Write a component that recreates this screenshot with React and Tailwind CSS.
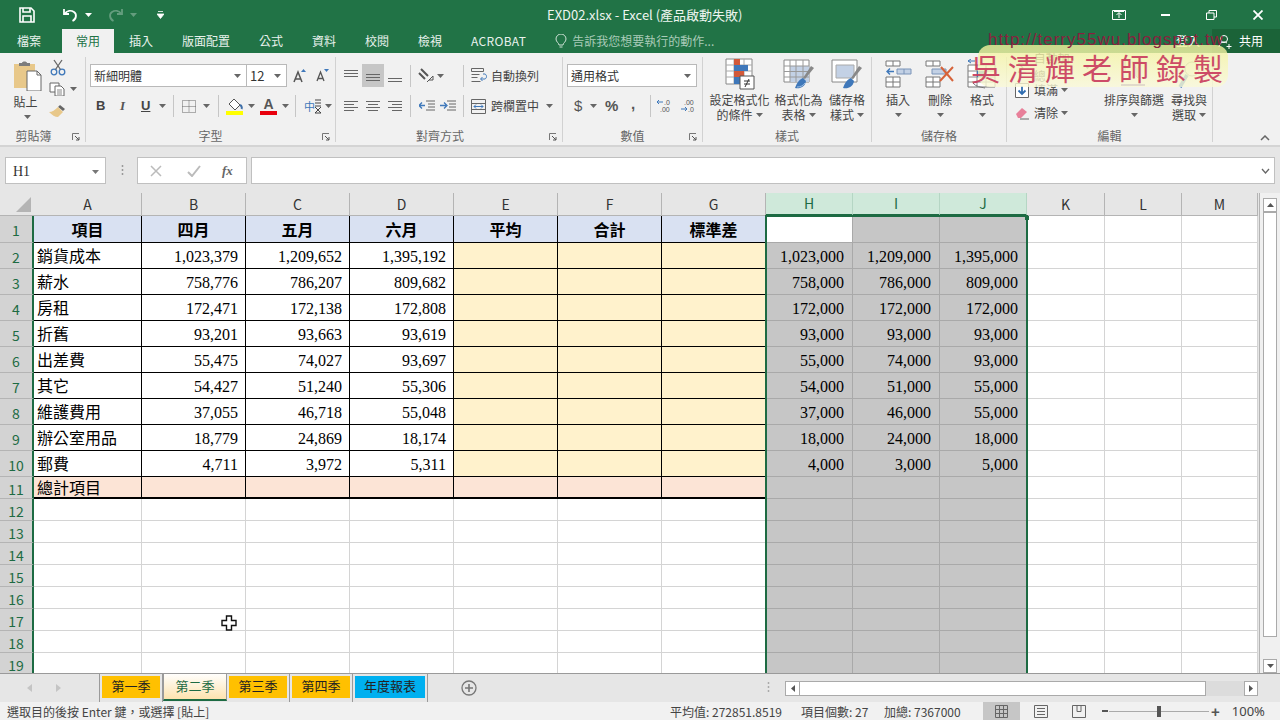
import React from "react";

const ui = { fontFamily: '"Noto Sans CJK TC","Noto Sans",sans-serif' };
const cellFont = { fontFamily: '"Liberation Serif","Noto Sans CJK TC",serif' };

const Caret = ({ c = "#666", className = "" }) => (
  <svg width="7" height="4" viewBox="0 0 7 4" className={className}><path d="M0 0h7L3.5 4z" fill={c} /></svg>
);

const Launcher = () => (
  <svg width="8" height="8" viewBox="0 0 8 8" className="mb-[1px]"><path d="M.5 7V.5H7" stroke="#777" fill="none" /><path d="M3 3l4 4M7 4v3H4" stroke="#555" fill="none" /></svg>
);

const Lines = ({ kind }) => {
  const rows = {
    left: [[1, 15], [1, 11], [1, 15], [1, 11]],
    center: [[1, 15], [3, 13], [1, 15], [3, 13]],
    right: [[1, 15], [5, 15], [1, 15], [5, 15]],
  }[kind];
  return (
    <svg width="16" height="14" viewBox="0 0 16 14">
      {rows.map((r, i) => <path key={i} d={`M${r[0]} ${2.5 + i * 3}H${r[1]}`} stroke="#666" />)}
    </svg>
  );
};

const VAlign = ({ pos }) => {
  const y = { top: 2, mid: 5, bot: 8 }[pos];
  return (
    <svg width="16" height="14" viewBox="0 0 16 14">
      {[0, 3, 6].map((d) => <path key={d} d={`M1 ${y + d + 0.5}H15`} stroke="#666" />)}
    </svg>
  );
};

const Group = ({ w, label, launcher, children, labelClass = "" }) => (
  <div className="flex flex-col shrink-0 h-[85px] mt-[4px] border-r border-[#d2d2d2] relative" style={{ width: w }}>
    <div className="flex-1 flex min-h-0">{children}</div>
    <div className={`h-[17px] flex items-end justify-center text-[12px] leading-none text-[#666] ${labelClass}`}>{label}</div>
    {launcher && <div className="absolute right-[5px] bottom-[0px] flex"><Launcher /></div>}
  </div>
);

const Sep = ({ className = "" }) => <div className={`w-px h-[22px] bg-[#c6c6c6] ${className}`} />;

const BigBtn = ({ w, icon, l1, l2, caretInline, cls = "" }) => (
  <div className={`flex flex-col items-center shrink-0 text-[12px] leading-[15px] text-[#444] ${cls}`} style={{ width: w }}>
    <div className="h-[32px] flex items-center justify-center">{icon}</div>
    <div className="mt-[2px] whitespace-nowrap">{l1}</div>
    {l2 ? (
      <div className="flex items-center gap-[3px] whitespace-nowrap">{l2}{caretInline && <Caret />}</div>
    ) : (
      <div className="h-[15px] flex items-center"><Caret /></div>
    )}
  </div>
);

const CondIcon = () => (
  <svg width="30" height="32" viewBox="0 0 30 32">
    <path d="M1 1h26v25H1z" fill="#fff" stroke="#888" />
    <path d="M9 1v25M19 1v20M1 7h26M1 13h26M1 19h26" stroke="#aaa" />
    <path d="M9 1h6v6H9z" fill="#d2593a" /><path d="M9 7h14v6H9z" fill="#3f78ba" /><path d="M9 13h10v6H9z" fill="#d2593a" /><path d="M9 19h6v7H9z" fill="#3f78ba" />
    <path d="M15 18h14v13H15z" fill="#fff" stroke="#555" />
    <path d="M19 23h6M19 26h6M24 21l-4 8" stroke="#333" />
  </svg>
);
const TableIcon = () => (
  <svg width="32" height="32" viewBox="0 0 32 32">
    <path d="M1 2h25v22H1z" fill="#fff" stroke="#888" />
    <path d="M7 8h19v16H7z" fill="#c3d1e5" />
    <path d="M1 8h25M1 13.5h25M1 19h25M7 2v22M13 2v22M20 2v22" stroke="#999" />
    <path d="M31 10l-9 11-2-1 8-12z" fill="#888" />
    <path d="M20 20c-3 1-6 4-8 10 5 1 10-1 11-7z" fill="#3f78ba" />
    <path d="M14 29c3 0 6-1 8-4" stroke="#9dbde0" fill="none" />
  </svg>
);
const StyleIcon = () => (
  <svg width="32" height="32" viewBox="0 0 32 32">
    <path d="M1 2h25v22H1z" fill="#fff" stroke="#888" />
    <path d="M5 7h18v13H5z" fill="#c3d1e5" stroke="#aaa" />
    <path d="M31 10l-9 11-2-1 8-12z" fill="#888" />
    <path d="M20 20c-3 1-6 4-8 10 5 1 10-1 11-7z" fill="#3f78ba" />
  </svg>
);
const InsertIcon = () => (
  <svg width="27" height="28" viewBox="0 0 27 28">
    <path d="M1 1h14v5H1zM1 17h14v10H1z" fill="#fff" stroke="#777" />
    <path d="M8 1v5M8 17v10M1 22h14" stroke="#777" />
    <path d="M12 9h14v5H12z" fill="#c3d1e5" stroke="#7a94b8" /><path d="M19 9v5" stroke="#7a94b8" />
    <path d="M9 11.5H2M5 8.5l-3 3 3 3" stroke="#3f78ba" strokeWidth="1.4" fill="none" />
  </svg>
);
const DeleteIcon = () => (
  <svg width="30" height="28" viewBox="0 0 30 28">
    <path d="M1 1h14v5H1zM1 17h14v10H1z" fill="#fff" stroke="#777" />
    <path d="M8 1v5M8 17v10M1 22h14" stroke="#777" />
    <path d="M7 9h14v5H7z" fill="#c3d1e5" stroke="#7a94b8" />
    <path d="M15 21L28 7M16 7l12 14" stroke="#d6633a" strokeWidth="2" />
  </svg>
);
const FormatIcon = () => (
  <svg width="30" height="31" viewBox="0 0 30 31">
    <path d="M1 6h27v22H1z" fill="#fff" stroke="#777" />
    <path d="M1 12h27M1 18h27M1 23h27M10 6v22M19 6v22" stroke="#888" />
    <path d="M10 12h9v6h-9z" fill="#3f78ba" />
    <path d="M8 2H1M4 0L1 2l3 2" stroke="#3f78ba" fill="none" />
    <path d="M6 24c3 4 8 4 12 5" stroke="#777" fill="none" />
  </svg>
);
const SortIcon = () => (
  <svg width="30" height="32" viewBox="0 0 30 32">
    <path d="M3 3l3-2 3 2M6 1v12" stroke="#888" fill="none" />
    <path d="M2 27h24" stroke="#8064a2" strokeWidth="2" />
    <path d="M13 4l10 0-4 6v10l-2-2v-8z" fill="#ddd" stroke="#999" />
  </svg>
);
const FindIcon = () => (
  <svg width="24" height="32" viewBox="0 0 24 32">
    <circle cx="15" cy="11" r="7" fill="#eee" stroke="#999" />
    <path d="M10 17L3 29" stroke="#3f78ba" strokeWidth="3.500" />
  </svg>
);

const columns = [
  ["A", 108], ["B", 104], ["C", 104], ["D", 104], ["E", 104], ["F", 104], ["G", 104],
  ["H", 87], ["I", 87], ["J", 87], ["K", 78], ["L", 77], ["M", 76],
];
const gridCols = "grid-cols-[34px_108px_104px_104px_104px_104px_104px_104px_87px_87px_87px_78px_77px_76px]";

const data = [
  ["銷貨成本", "1,023,379", "1,209,652", "1,395,192", "1,023,000", "1,209,000", "1,395,000"],
  ["薪水", "758,776", "786,207", "809,682", "758,000", "786,000", "809,000"],
  ["房租", "172,471", "172,138", "172,808", "172,000", "172,000", "172,000"],
  ["折舊", "93,201", "93,663", "93,619", "93,000", "93,000", "93,000"],
  ["出差費", "55,475", "74,027", "93,697", "55,000", "74,000", "93,000"],
  ["其它", "54,427", "51,240", "55,306", "54,000", "51,000", "55,000"],
  ["維護費用", "37,055", "46,718", "55,048", "37,000", "46,000", "55,000"],
  ["辦公室用品", "18,779", "24,869", "18,174", "18,000", "24,000", "18,000"],
  ["郵費", "4,711", "3,972", "5,311", "4,000", "3,000", "5,000"],
];
const heads = ["項目", "四月", "五月", "六月", "平均", "合計", "標準差"];

const RowHead = ({ n, h }) => (
  <div className="bg-[#d3d3d3] border-b border-[#b4b4b4] border-r-[2px] border-r-[#1d6b43] text-[#1d6b43] text-[14px] flex items-center justify-center pt-[3px] overflow-hidden" style={{ ...ui, height: h }}>{n}</div>
);

const blank = "border-r border-b border-[#d4d4d4] bg-white";
const gray = "border-r border-b border-[#a9a9a9] bg-[#c6c6c6]";
const blk = "border-r border-b border-black";

const Sheet = () => {
  const out = [];
  out.push(
    <div key="corner" className="h-[23px] bg-[#e6e6e6] border-b border-[#b4b4b4] flex items-end justify-end pr-[3px] pb-[3px]">
      <svg width="15" height="15" viewBox="0 0 15 15"><path d="M15 0v15H0z" fill="#b4b4b4" /></svg>
    </div>
  );
  columns.forEach(([c]) => {
    const sel = c === "H" || c === "I" || c === "J";
    out.push(
      <div key={c} className={`h-[23px] flex items-center justify-center text-[14px] border-r ${sel ? "bg-[#cfe9da] text-[#1d6b43] border-r-[#b5d6c4] border-b-[2px] border-b-[#1d6b43]" : "bg-[#e6e6e6] text-[#333] border-r-[#b4b4b4] border-b border-b-[#b4b4b4]"}`} style={ui}>{c}</div>
    );
  });
  out.push(<RowHead key="r1" n={1} h={27} />);
  heads.forEach((t, i) => out.push(
    <div key={"h" + i} className={`h-[27px] bg-[#d9e1f2] ${blk} flex items-center justify-center pt-[3px] text-[16px] font-bold text-black`} style={cellFont}>{t}</div>
  ));
  out.push(<div key="h1" className="h-[27px] bg-white border-r border-b border-[#a9a9a9]" />);
  out.push(<div key="i1" className={`h-[27px] ${gray}`} />);
  out.push(<div key="j1" className={`h-[27px] ${gray}`} />);
  ["K", "L", "M"].forEach((c) => out.push(<div key={c + 1} className={`h-[27px] ${blank}`} />));
  data.forEach((r, ri) => {
    const n = ri + 2;
    out.push(<RowHead key={"r" + n} n={n} h={26} />);
    out.push(<div key={"a" + n} className={`h-[26px] bg-white ${blk} flex items-center pl-[3px] pt-[3px] text-[16px] text-black whitespace-nowrap`} style={cellFont}>{r[0]}</div>);
    [1, 2, 3].forEach((k) => out.push(<div key={n + "n" + k} className={`h-[26px] bg-white ${blk} flex items-center justify-end pr-[7px] pt-[3px] text-[16px] text-black`} style={cellFont}>{r[k]}</div>));
    [0, 1, 2].forEach((k) => out.push(<div key={n + "y" + k} className={`h-[26px] bg-[#fff2cc] ${blk}`} />));
    [4, 5, 6].forEach((k) => out.push(<div key={n + "g" + k} className={`h-[26px] ${gray} flex items-center justify-end pr-[8px] pt-[3px] text-[16px] text-black`} style={cellFont}>{r[k]}</div>));
    [0, 1, 2].forEach((k) => out.push(<div key={n + "b" + k} className={`h-[26px] ${blank}`} />));
  });
  out.push(<RowHead key="r11" n={11} h={22} />);
  out.push(<div key="a11" className="h-[22px] bg-[#fce4d6] border-r border-black border-b-[2px] border-b-black flex items-center pl-[3px] pt-[3px] text-[16px] text-black" style={cellFont}>總計項目</div>);
  for (let k = 0; k < 6; k++) out.push(<div key={"t" + k} className="h-[22px] bg-[#fce4d6] border-r border-black border-b-[2px] border-b-black" />);
  for (let k = 0; k < 3; k++) out.push(<div key={"g11" + k} className={`h-[22px] ${gray}`} />);
  for (let k = 0; k < 3; k++) out.push(<div key={"b11" + k} className={`h-[22px] ${blank}`} />);
  for (let n = 12; n <= 19; n++) {
    out.push(<RowHead key={"r" + n} n={n} h={22} />);
    for (let k = 0; k < 7; k++) out.push(<div key={n + "e" + k} className={`h-[22px] ${blank}`} />);
    for (let k = 0; k < 3; k++) out.push(<div key={n + "s" + k} className={`h-[22px] ${gray}`} />);
    for (let k = 0; k < 3; k++) out.push(<div key={n + "w" + k} className={`h-[22px] ${blank}`} />);
  }
  return <div className={`grid ${gridCols} w-[1259px]`}>{out}</div>;
};

const Tab = ({ w, bg, children }) => (
  <div className="h-[28px] flex items-start shrink-0 border-r border-[#9a9a9a] px-[2px] pt-[2px]" style={{ width: w }}>
    <div className={`h-[22px] w-full flex items-center justify-center text-[13px] text-[#222] ${bg}`} style={cellFont}>{children}</div>
  </div>
);

export default function App() {
  return (
    <div className="w-[1280px] h-[720px] overflow-hidden relative flex flex-col bg-[#e6e6e6]" style={ui}>
      {/* Title bar */}
      <div className="h-[29px] bg-[#217346] flex items-center text-white shrink-0 relative">
        <div className="w-[547px] flex items-center shrink-0">
          <svg width="16" height="16" viewBox="0 0 16 16" className="ml-[19px]">
            <path d="M1 1h11l3 3v11H1z" fill="none" stroke="#fff" strokeWidth="1.6" />
            <path d="M4 1v4h7V1M4 15v-6h8v6" fill="none" stroke="#fff" strokeWidth="1.6" />
          </svg>
          <svg width="16" height="14" viewBox="0 0 16 14" className="ml-[27px]">
            <path d="M2 1v5h5" stroke="#fff" strokeWidth="1.8" fill="none" />
            <path d="M2.5 6C5 2.5 9 2 12 4s2.5 7-1.5 9" stroke="#fff" strokeWidth="1.8" fill="none" />
          </svg>
          <Caret c="#fff" className="ml-[7px]" />
          <svg width="16" height="14" viewBox="0 0 16 14" className="ml-[16px] opacity-30">
            <path d="M14 1v5H9" stroke="#fff" strokeWidth="1.8" fill="none" />
            <path d="M13.5 6C11 2.5 7 2 4 4s-2.5 7 1.5 9" stroke="#fff" strokeWidth="1.8" fill="none" />
          </svg>
          <Caret c="#fff" className="ml-[6px] opacity-30" />
          <svg width="7" height="8" viewBox="0 0 7 8" className="ml-[20px]"><path d="M1 .5h5M0 3h7L3.5 7.5z" stroke="#fff" fill="#fff" strokeWidth=".8" /></svg>
        </div>
        <div className="text-[13px] text-[#eef5f0] whitespace-nowrap">EXD02.xlsx - Excel (產品啟動失敗)</div>
        <div className="ml-auto flex items-center pr-[17px] gap-[33px]">
          <svg width="14" height="10" viewBox="0 0 14 10"><path d="M.5.500h13v9H.5z" stroke="#fff" fill="none" /><path d="M7 8V3M4.500 5L7 2.500 9.500 5M2 1.500h10" stroke="#fff" fill="none" /></svg>
          <svg width="9" height="2" viewBox="0 0 9 2" className="ml-[2px]"><path d="M0 1h9" stroke="#fff" strokeWidth="2" /></svg>
          <svg width="11" height="10" viewBox="0 0 11 10" className="ml-[3px]"><path d="M.5 3h7.500v6.500H.5zM3 3V.5h7.500V7H8" stroke="#fff" fill="none" /></svg>
          <svg width="10" height="10" viewBox="0 0 10 10" className="ml-[3px]"><path d="M.5.500l9 9M9.500.500l-9 9" stroke="#fff" strokeWidth="1.800" /></svg>
        </div>
      </div>

      {/* Tabs */}
      <div className="h-[24px] bg-[#217346] flex items-stretch shrink-0 text-[12px] text-[#e9f2ed]">
        <div className="w-[62px] pl-[17px] flex items-center shrink-0">檔案</div>
        <div className="flex gap-px">
          <div className="px-[14px] flex items-center bg-[#f1f1f1] text-[#217346]">常用</div>
          <div className="px-[14px] flex items-center">插入</div>
          <div className="px-[14px] flex items-center">版面配置</div>
          <div className="px-[14px] flex items-center">公式</div>
          <div className="px-[14px] flex items-center">資料</div>
          <div className="px-[14px] flex items-center">校閱</div>
          <div className="px-[14px] flex items-center">檢視</div>
          <div className="px-[14px] flex items-center tracking-[.3px]">ACROBAT</div>
        </div>
        <div className="flex items-center ml-[15px] gap-[5px] text-[#a9cbb8]">
          <svg width="12" height="15" viewBox="0 0 12 15"><path d="M4 11c0-2-3-3-3-6a5 5 0 0 1 10 0c0 3-3 4-3 6zM4.500 13h3" stroke="#cfe2d6" fill="none" /></svg>
          <span>告訴我您想要執行的動作...</span>
        </div>
        <div className="ml-auto flex items-center">
          <span className="text-white mr-[12px]">登入</span>
          <div className="w-[68px] h-full bg-[#1b6338] flex items-center pl-[6px] gap-[6px]">
            <svg width="15" height="15" viewBox="0 0 15 15"><circle cx="6" cy="5" r="3.500" stroke="#fff" fill="none" /><path d="M1 13c0-3 2-5 5-5 1 0 2 .3 3 1M11 10v5M8.500 12.500h5" stroke="#fff" fill="none" /></svg>
            <span className="text-white">共用</span>
          </div>
        </div>
      </div>

      {/* Ribbon */}
      <div className="h-[94px] bg-[#f1f1f1] border-b-[2px] border-[#d4d4d4] shrink-0 flex relative">
        {/* 剪貼簿 */}
        <Group w={86} label="剪貼簿" launcher labelClass="pr-[18px]">
          <div className="w-[46px] ml-[4px] flex flex-col items-center text-[12px] leading-[15px] text-[#444]">
            <svg width="29" height="30" viewBox="0 0 29 30" className="mt-[4px]">
              <path d="M1 3h21v24H1z" fill="#e8c88a" />
              <path d="M6 5V2h3c0-2 5-2 5 0h3v3z" fill="#7c7c7c" />
              <path d="M14 10h10l4 4v16H14z" fill="#fff" stroke="#666" />
              <path d="M24 10v4h4" fill="none" stroke="#666" />
            </svg>
            <div className="mt-[3px] mr-[3px]">貼上</div>
            <Caret className="mt-[6px]" />
          </div>
          <div className="flex flex-col items-start ml-[-1px] pt-[2px] gap-[6px]">
            <svg width="16" height="17" viewBox="0 0 16 17" className="ml-[1px]">
              <circle cx="4" cy="13" r="2.800" stroke="#3f78ba" strokeWidth="1.300" fill="none" />
              <circle cx="12" cy="13" r="2.800" stroke="#3f78ba" strokeWidth="1.300" fill="none" />
              <path d="M5.500 10.500L12 1M10.500 10.500L4 1" stroke="#666" strokeWidth="1.300" />
            </svg>
            <div className="flex items-center gap-[5px]">
              <svg width="16" height="14" viewBox="0 0 16 14"><path d="M1 1h9v9H1z" fill="#fff" stroke="#666" /><path d="M6 4h6l3 3v7H6z" fill="#fff" stroke="#666" /><path d="M8 8h5M8 10h5M8 12h5" stroke="#888" /></svg>
              <Caret />
            </div>
            <svg width="17" height="14" viewBox="0 0 17 14" className="mt-[2px]"><path d="M11 1l5 4-2 2-5-4z" fill="#666" /><path d="M9 3l5 5-5 5C6 13 3 11 0 8c3 0 6-2 9-5z" fill="#e8c88a" /></svg>
          </div>
        </Group>

        {/* 字型 */}
        <Group w={250} label="字型" launcher>
          <div className="flex flex-col w-full pl-[4px] pt-[7px]">
            <div className="flex items-center h-[23px]">
              <div className="w-[157px] h-[23px] bg-white border border-[#b9b9b9] flex items-center justify-between px-[3px] text-[12px] text-[#333]">
                <span>新細明體</span><Caret className="mr-[2px]" />
              </div>
              <div className="w-[40px] h-[23px] bg-white border border-[#b9b9b9] border-l-0 flex items-center justify-between px-[3px] text-[13px] text-[#333]">
                <span>12</span><Caret className="mr-[2px]" />
              </div>
              <svg width="13" height="14" viewBox="0 0 13 14" className="ml-[6px]"><path d="M1 13L5 3l4 10M2.500 10h5" stroke="#555" strokeWidth="1.500" fill="none" /><path d="M8 3l2.500-3L13 3z" fill="#3f78ba" /></svg>
              <svg width="13" height="13" viewBox="0 0 13 13" className="ml-[10px]"><path d="M1 12L4.500 3 8 12M2.200 9.500h4.500" stroke="#555" strokeWidth="1.300" fill="none" /><path d="M8 0h5l-2.500 3z" fill="#3f78ba" /></svg>
            </div>
            <div className="flex items-center h-[22px] mt-[8px] text-[#444]">
              <span className="w-[12px] ml-[6px] text-[13px] font-bold" style={{ fontFamily: '"Liberation Sans",sans-serif' }}>B</span>
              <span className="w-[12px] ml-[12px] text-[13px] italic font-bold text-[#555]" style={{ fontFamily: '"Liberation Serif",serif' }}>I</span>
              <span className="w-[12px] ml-[9px] text-[13px] font-bold underline" style={{ fontFamily: '"Liberation Sans",sans-serif' }}>U</span>
              <Caret className="ml-[6px]" />
              <Sep className="ml-[7px]" />
              <svg width="14" height="13" viewBox="0 0 14 13" className="ml-[8px]"><path d="M.5.500h13v12H.5zM7 .5v12M.5 6.500h13" stroke="#666" strokeDasharray="1 1" fill="none" /></svg>
              <Caret className="ml-[7px]" />
              <Sep className="ml-[8px]" />
              <div className="flex flex-col items-center ml-[7px] w-[17px]">
                <svg width="16" height="13" viewBox="0 0 16 13"><path d="M7 1l6 6-5 5-6-6z" fill="#fff" stroke="#555" /><path d="M13 7c2 1 2 3 1.500 4" stroke="#3f6fa8" strokeWidth="2" fill="none" /></svg>
                <div className="w-[17px] h-[4px] bg-[#ffff00]" />
              </div>
              <Caret className="ml-[5px]" />
              <div className="flex flex-col items-center ml-[5px] w-[17px]">
                <span className="text-[14px] leading-[13px] font-bold text-[#555]" style={{ fontFamily: '"Liberation Sans",sans-serif' }}>A</span>
                <div className="w-[17px] h-[4px] bg-[#e8000d]" />
              </div>
              <Caret className="ml-[5px]" />
              <Sep className="ml-[6px]" />
              <span className="ml-[8px] text-[11px] text-[#3f78ba] leading-none">中</span>
              <svg width="6" height="15" viewBox="0 0 6 15"><path d="M0 1h6M0 4h6M0 7h6M0 14l6-6M0 8l6 6M0 14h6" stroke="#444" fill="none" /></svg>
              <Caret className="ml-[4px]" />
            </div>
          </div>
        </Group>

        {/* 對齊方式 */}
        <Group w={227} label="對齊方式" launcher labelClass="pr-[18px]">
          <div className="flex flex-col w-full pl-[4px] pt-[7px]">
            <div className="flex items-center h-[23px]">
              <div className="w-[22px] flex justify-center -mt-[2px]"><VAlign pos="top" /></div>
              <div className="w-[22px] h-[23px] bg-[#c6c6c6] flex items-center justify-center"><VAlign pos="mid" /></div>
              <div className="w-[22px] flex justify-center mt-[3px]"><VAlign pos="bot" /></div>
              <Sep className="ml-[4px]" />
              <svg width="17" height="15" viewBox="0 0 17 15" className="ml-[7px]"><path d="M1 5l6 6M3 1l7 7" stroke="#555" strokeWidth="2" /><path d="M11 12h4V8M9 14l6-6" stroke="#555" fill="none" /></svg>
              <Caret className="ml-[2px]" />
              <Sep className="ml-[19px]" />
              <svg width="16" height="15" viewBox="0 0 16 15" className="ml-[7px]"><path d="M.5.500h12v3H.5zM.5 6.500h8M.5 9.500h6M.5 13.500h9" stroke="#666" fill="none" /><path d="M12 6h2c2 1 2 4 0 5h-4M11.500 9l-2 2 2 2" stroke="#3f78ba" fill="none" /></svg>
              <span className="ml-[4px] text-[12px] text-[#444] whitespace-nowrap">自動換列</span>
            </div>
            <div className="flex items-center h-[22px] mt-[8px]">
              <div className="w-[22px] flex justify-center"><Lines kind="left" /></div>
              <div className="w-[22px] flex justify-center"><Lines kind="center" /></div>
              <div className="w-[22px] flex justify-center"><Lines kind="right" /></div>
              <Sep className="ml-[4px]" />
              <svg width="16" height="12" viewBox="0 0 16 12" className="ml-[8px]"><path d="M7 1h9M9 4h7M9 7h7M7 10h9" stroke="#666" /><path d="M6 5.500H0M3 2.500l-3 3 3 3" stroke="#3f78ba" strokeWidth="1.300" fill="none" /></svg>
              <svg width="16" height="12" viewBox="0 0 16 12" className="ml-[5px]"><path d="M7 1h9M9 4h7M9 7h7M7 10h9" stroke="#666" /><path d="M0 5.500h6M4 2.500l3 3-3 3" stroke="#3f78ba" strokeWidth="1.300" fill="none" /></svg>
              <Sep className="ml-[7px]" />
              <svg width="15" height="15" viewBox="0 0 15 15" className="ml-[7px]"><path d="M.5.500h14v14H.5zM.5 4.500h14M.5 10.500h14" stroke="#666" fill="none" /><path d="M3 7.500h9M5 5.500l-2 2 2 2M10 5.500l2 2-2 2" stroke="#3f78ba" fill="none" /></svg>
              <span className="ml-[5px] text-[12px] text-[#444] whitespace-nowrap">跨欄置中</span>
              <Caret className="ml-[7px]" />
            </div>
          </div>
        </Group>

        {/* 數值 */}
        <Group w={140} label="數值" launcher>
          <div className="flex flex-col w-full pl-[4px] pt-[7px]">
            <div className="w-[130px] h-[23px] bg-white border border-[#b9b9b9] flex items-center justify-between px-[3px] text-[12px] text-[#333]">
              <span>通用格式</span><Caret className="mr-[2px]" />
            </div>
            <div className="flex items-center h-[22px] mt-[8px] text-[#555]" style={{ fontFamily: '"Liberation Sans",sans-serif' }}>
              <span className="ml-[7px] w-[10px] text-[15px]">$</span>
              <Caret className="ml-[6px]" />
              <span className="ml-[8px] text-[15px] font-bold w-[14px]">%</span>
              <span className="ml-[12px] text-[15px] font-bold w-[6px] leading-none -mt-[6px]">,</span>
              <Sep className="ml-[13px]" />
              <svg width="15" height="14" viewBox="0 0 15 14" className="ml-[6px]"><path d="M6 3H0M2 1L0 3l2 2" stroke="#3f78ba" fill="none" /><text x="7" y="6" fontSize="7" fill="#555">.0</text><text x="3" y="13" fontSize="7" fill="#555">.00</text></svg>
              <svg width="15" height="14" viewBox="0 0 15 14" className="ml-[9px]"><text x="3" y="6" fontSize="7" fill="#555">.00</text><path d="M0 10h6M4 8l2 2-2 2" stroke="#3f78ba" fill="none" /><text x="7" y="13" fontSize="7" fill="#555">.0</text></svg>
            </div>
          </div>
        </Group>

        {/* 樣式 */}
        <Group w={169} label="樣式">
          <div className="flex w-full pl-[6px] pt-[1px]">
            <BigBtn w={61} icon={<CondIcon />} l1="設定格式化" l2="的條件" caretInline />
            <BigBtn w={55} icon={<TableIcon />} l1="格式化為" l2="表格" caretInline cls="ml-[1px]" />
            <BigBtn w={40} icon={<StyleIcon />} l1="儲存格" l2="樣式" caretInline cls="ml-[1px]" />
          </div>
        </Group>

        {/* 儲存格 */}
        <Group w={135} label="儲存格">
          <div className="flex w-full pl-[5px] pt-[1px]">
            <BigBtn w={42} icon={<InsertIcon />} l1="插入" />
            <BigBtn w={42} icon={<DeleteIcon />} l1="刪除" />
            <BigBtn w={42} icon={<FormatIcon />} l1="格式" />
          </div>
        </Group>

        {/* 編輯 */}
        <Group w={206} label="編輯">
          <div className="flex w-full pl-[8px] pt-[1px] text-[12px] text-[#444]">
            <div className="flex flex-col gap-[7px] w-[76px] shrink-0 pt-[1px]">
              <div className="flex items-center h-[16px]">
                <span className="w-[14px] mr-[5px] text-[15px] leading-none text-[#666] text-center" style={{ fontFamily: '"Liberation Sans",sans-serif' }}>Σ</span>
                <span>自動加總</span><Caret className="ml-[3px]" />
              </div>
              <div className="flex items-center h-[16px]">
                <svg width="14" height="15" viewBox="0 0 14 15" className="mr-[5px]"><path d="M.5.500h13v14H.5z" fill="#fff" stroke="#666" /><path d="M7 3v8M3.500 7.500L7 11l3.500-3.500" stroke="#2f6db0" strokeWidth="1.800" fill="none" /></svg>
                <span>填滿</span><Caret className="ml-[3px]" />
              </div>
              <div className="flex items-center h-[16px]">
                <svg width="14" height="13" viewBox="0 0 14 13" className="mr-[5px]"><path d="M1 7l6-6 5 4-6 6H3z" fill="#e8809a" /><path d="M5 12h9" stroke="#666" /></svg>
                <span>清除</span><Caret className="ml-[3px]" />
              </div>
            </div>
            <BigBtn w={60} icon={<SortIcon />} l1="排序與篩選" cls="ml-[13px]" />
            <BigBtn w={36} icon={<FindIcon />} l1="尋找與" l2="選取" caretInline cls="ml-[7px]" />
          </div>
        </Group>
        <svg width="10" height="6" viewBox="0 0 10 6" className="absolute right-[10px] bottom-[4px]"><path d="M1 5l4-4 4 4" stroke="#666" strokeWidth="1.500" fill="none" /></svg>
      </div>

      {/* Formula bar */}
      <div className="h-[46px] bg-[#e6e6e6] shrink-0 flex items-start pt-[10px] pl-[5px] pr-[5px]">
        <div className="w-[101px] h-[27px] bg-white border border-[#c0c0c0] flex items-center justify-between pl-[7px] pr-[6px] pt-[2px] text-[14px] text-[#333]" style={cellFont}>
          <span>H1</span><Caret c="#777" />
        </div>
        <svg width="3" height="11" viewBox="0 0 3 11" className="ml-[15px] mt-[8px]"><path d="M1.500 0v2M1.500 4v2M1.500 8v2" stroke="#999" strokeWidth="1.500" /></svg>
        <div className="ml-[13px] w-[110px] h-[27px] bg-white border border-[#c0c0c0] flex items-center pl-[12px]">
          <svg width="12" height="12" viewBox="0 0 12 12"><path d="M1 1l10 10M11 1L1 11" stroke="#bbb" strokeWidth="1.500" /></svg>
          <svg width="14" height="12" viewBox="0 0 14 12" className="ml-[25px]"><path d="M1 7l4 4 8-10" stroke="#bbb" strokeWidth="2" fill="none" /></svg>
          <span className="ml-[21px] text-[13px] italic font-bold text-[#666]" style={cellFont}>fx</span>
        </div>
        <div className="ml-[4px] flex-1 h-[27px] bg-white border border-[#c0c0c0] flex items-center justify-end pr-[4px]">
          <svg width="9" height="6" viewBox="0 0 9 6"><path d="M1 1l3.500 4L8 1" stroke="#666" fill="none" strokeWidth="1.300" /></svg>
        </div>
      </div>

      {/* Sheet */}
      <div className="h-[481px] shrink-0 flex relative overflow-hidden border-b border-[#9a9a9a]">
        <Sheet />
        <div className="flex-1 bg-[#f0f0f0] border-l border-[#b4b4b4] flex flex-col items-center pt-[5px] px-[3px]">
          <div className="w-[14px] h-[14px] bg-white border border-[#aaa] flex items-center justify-center shrink-0"><svg width="7" height="4" viewBox="0 0 7 4"><path d="M3.500 0L7 4H0z" fill="#555" /></svg></div>
          <div className="w-[14px] h-[425px] bg-white border border-[#aaa] shrink-0" />
          <div className="flex-1" />
          <div className="w-[14px] h-[14px] bg-white border border-[#aaa] flex items-center justify-center shrink-0"><Caret c="#555" /></div>
        </div>
        {/* selection overlay */}
        <div className="absolute left-[765px] top-[22px] w-[263px] h-[470px] border-[2px] border-[#1d6b43] pointer-events-none" />
        <div className="absolute left-[1025px] top-[23px] w-[4px] h-[4px] bg-[#1d6b43]" />
        {/* cell cursor */}
        <svg width="16" height="16" viewBox="0 0 16 16" className="absolute left-[221px] top-[422px]">
          <path d="M5.500 1h5v4.500H15v5h-4.500V15h-5v-4.500H1v-5h4.500z" fill="#fff" stroke="#111" strokeWidth="1.400" />
        </svg>
      </div>

      {/* Sheet tabs */}
      <div className="h-[28px] bg-[#e6e6e6] shrink-0 flex items-start">
        <div className="w-[100px] h-[28px] flex items-center shrink-0 border-r border-[#9a9a9a]">
          <svg width="5" height="8" viewBox="0 0 5 8" className="ml-[27px]"><path d="M5 0v8L0 4z" fill="#c4c4c4" /></svg>
          <svg width="5" height="8" viewBox="0 0 5 8" className="ml-[24px]"><path d="M0 0v8l5-4z" fill="#c4c4c4" /></svg>
        </div>
        <Tab w={63} bg="bg-[#ffc000]">第一季</Tab>
        <div className="w-[64px] h-[28px] shrink-0 border-b-[2px] border-b-[#1d6b43] border-x border-x-[#9a9a9a] -mt-px pt-px bg-gradient-to-b from-white to-[#fde3ae] flex items-center justify-center text-[13px] text-[#1d6b43]" style={cellFont}>第二季</div>
        <Tab w={63} bg="bg-[#ffc000]">第三季</Tab>
        <Tab w={63} bg="bg-[#ffc000]">第四季</Tab>
        <Tab w={75} bg="bg-[#00b0f0]">年度報表</Tab>
        <svg width="16" height="16" viewBox="0 0 16 16" className="ml-[33px] mt-[6px]"><circle cx="8" cy="8" r="7" fill="none" stroke="#777" strokeWidth="1.300" /><path d="M8 4v8M4 8h8" stroke="#777" strokeWidth="1.600" /></svg>
        <svg width="3" height="11" viewBox="0 0 3 11" className="ml-[290px] mt-[8px]"><path d="M1.500 0v2M1.500 4v2M1.500 8v2" stroke="#aaa" strokeWidth="1.500" /></svg>
        <div className="ml-[15px] mt-[7px] w-[473px] h-[15px] flex bg-[#dcdcdc]">
          <div className="w-[15px] h-[15px] bg-white border border-[#aaa] flex items-center justify-center"><svg width="4" height="7" viewBox="0 0 4 7"><path d="M4 0v7L0 3.500z" fill="#555" /></svg></div>
          <div className="w-[406px] h-[15px] bg-white border-y border-r border-[#aaa]" />
          <div className="flex-1" />
          <div className="w-[14px] h-[15px] bg-white border border-[#aaa] flex items-center justify-center"><svg width="4" height="7" viewBox="0 0 4 7"><path d="M0 0v7l4-3.500z" fill="#555" /></svg></div>
        </div>
      </div>

      {/* Status bar */}
      <div className="h-[18px] bg-[#f1f1f1] shrink-0 flex items-center text-[12px] text-[#444] leading-none whitespace-nowrap">
        <span className="ml-[7px] w-[663px] pt-[2px]">選取目的後按 Enter 鍵，或選擇 [貼上]</span>
        <span className="w-[131px] pt-[2px]">平均值: 272851.8519</span>
        <span className="w-[83px] pt-[2px]">項目個數: 27</span>
        <span className="w-[99px] pt-[2px]">加總: 7367000</span>
        <div className="w-[37px] h-[18px] bg-[#c6c6c6] flex items-center justify-center">
          <svg width="13" height="13" viewBox="0 0 13 13"><path d="M.5.500h12v12H.5zM.5 4.500h12M.5 8.500h12M4.500.5v12M8.500.5v12" stroke="#666" fill="none" /></svg>
        </div>
        <svg width="14" height="13" viewBox="0 0 14 13" className="ml-[14px]"><path d="M.5.500h13v12H.5z" stroke="#666" fill="none" /><path d="M3 3.500h8M3 6.500h8M3 9.500h8" stroke="#666" /></svg>
        <svg width="14" height="13" viewBox="0 0 14 13" className="ml-[24px]"><path d="M.5.500h13v12H.5zM5 .5v6h4v-6" stroke="#666" fill="none" /></svg>
        <div className="ml-[16px] w-[6px] h-[2px] bg-[#555]" />
        <div className="ml-[1px] w-[100px] h-px bg-[#aaa] relative">
          <div className="absolute left-[48px] -top-[5px] w-[4px] h-[11px] bg-[#555]" />
        </div>
        <span className="ml-[2px] text-[15px] font-bold text-[#555]" style={{ fontFamily: '"Liberation Sans",sans-serif' }}>+</span>
        <span className="ml-[12px] text-[13px] text-[#444]" style={{ fontFamily: '"Noto Sans",sans-serif' }}>100%</span>
      </div>

      {/* Watermark */}
      <div className="absolute left-[978px] top-[45px] w-[250px] h-[42px] rounded-[12px] bg-gradient-to-b from-[#f4f39a] to-[#faf9d8] opacity-80" />
      <div className="absolute left-[988px] top-[27px] text-[17px] tracking-[1px] text-[#8a1f3f] whitespace-nowrap" style={{ fontFamily: '"Liberation Sans",sans-serif' }}>http://terry55wu.blogspot.tw</div>
      <div className="absolute left-[971px] top-[45px] text-[30px] leading-[44px] tracking-[7px] text-[#c93a5c] opacity-90 whitespace-nowrap">吳清輝老師錄製</div>
    </div>
  );
}
